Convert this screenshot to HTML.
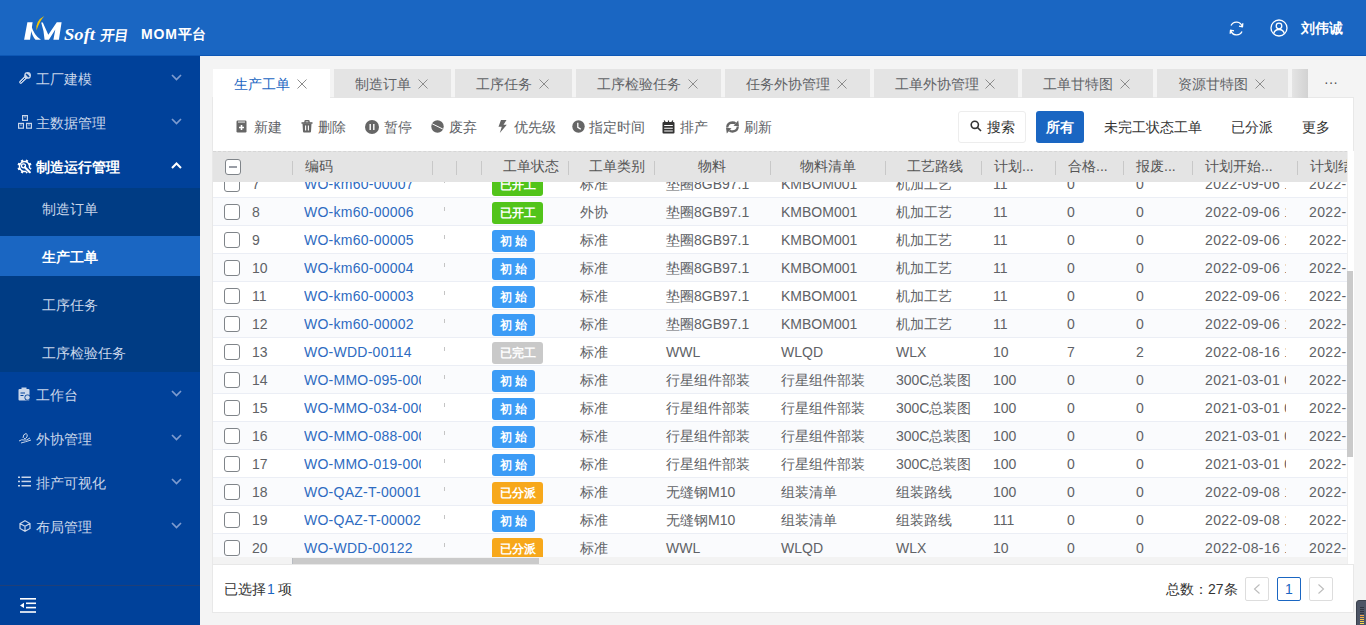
<!DOCTYPE html><html><head><meta charset="utf-8"><style>
*{box-sizing:border-box;margin:0;padding:0}
html,body{width:1366px;height:625px;overflow:hidden;background:#f4f4f4;font-family:"Liberation Sans",sans-serif;font-size:14px;color:#606266}
.a{position:absolute;white-space:nowrap}
#hdr{position:absolute;left:0;top:0;width:1366px;height:56px;background:#1a66c2;border-bottom:1px solid #0d57b5}
#side{position:absolute;left:0;top:56px;width:200px;height:569px;background:#00419a}
.mi{position:absolute;left:0;width:200px;height:44px;color:#c9d6ea}
.mi .t{position:absolute;left:36px;top:15px;line-height:16px}
.mi svg.ic{position:absolute;left:18px;top:16px}
.mi svg.ch{position:absolute;left:171px;top:18px}
.sub{position:absolute;left:0;top:132px;width:200px;height:184px;background:#003c84}
.si{position:absolute;left:0;width:200px;height:40px;color:#c9d6ea}
.si .t{position:absolute;left:42px;top:13px;line-height:16px}
#panel{position:absolute;left:212px;top:97px;width:1142px;height:516px;background:#fff;border:1px solid #e8e8e8}
.tab{position:absolute;top:69px;height:29px;background:#e4e4e4;color:#606266}
.tab .t{position:absolute;top:7px;line-height:16px}
.tab svg{position:absolute;top:10px}
.tb{position:absolute;top:119px;color:#606266;line-height:16px}
.tb svg{position:absolute;top:2px}
#grid{position:absolute;left:213px;top:151px;width:1134px;height:413px;overflow:hidden;background:#fff}
.row{position:absolute;left:0;width:1500px;height:28px;border-bottom:1px solid #ebeef5}
.row.e{background:#fafbfd}
.c{position:absolute;top:6px;line-height:17px;white-space:nowrap;color:#606266}
.cb{position:absolute;left:11px;top:6px;width:16px;height:16px;border:1px solid #7f8489;border-radius:3px;background:#fff}
.bd{position:absolute;left:279px;top:4px;height:22px;border-radius:3px;color:#fff;font-size:12px;font-weight:bold;line-height:22px;text-align:center}
#th{position:absolute;left:0;top:0;width:1500px;height:31px;background:#e4e4e4;border-top:1px dashed #d6d6d6}
.hs{position:absolute;top:9px;width:1px;height:14px;background:#c8c8c8}
.ht{position:absolute;top:6px;line-height:17px;color:#555;white-space:nowrap}
</style></head><body>
<div id="hdr">
<svg class="a" style="left:0;top:0" width="140" height="56" viewBox="0 0 140 56">
<path d="M24.1 39.8 L30 39.8 L32.6 22.2 L27.4 22.2 Z" fill="#fff"/>
<path d="M30.2 27.5 Q32 36 35.5 39.8 L41 39.8 Q34 35.5 31.2 25.5 Z" fill="#fff"/>
<path d="M36.4 30.6 Q35.2 20.5 44.3 15.9 Q39.2 21.5 36.4 30.6 Z" fill="#f5c400"/>
<path d="M41.2 22.6 L42.8 22.6 L48.3 34.8 L56.8 22.2 L61.6 22.2 L58.9 39.8 L53.4 39.8 L55.3 29.5 L48.9 39.8 L44.6 39.8 Q43.8 30 41.2 22.6 Z" fill="#fff"/>
<text x="64" y="40" font-family="Liberation Serif" font-style="italic" font-weight="bold" font-size="16" fill="#fff" textLength="31" lengthAdjust="spacingAndGlyphs">Soft</text>
<text x="0" y="0" transform="translate(100 39.5) skewX(-8)" font-size="14" font-weight="bold" fill="#fff" textLength="28" lengthAdjust="spacingAndGlyphs">开目</text>
</svg>
<div class="a" style="left:141px;top:26px;color:#fff;font-weight:bold;font-size:14px;line-height:16px;letter-spacing:0.8px">MOM平台</div>
<svg class="a" style="left:1228px;top:20px" width="17" height="17" viewBox="0 0 17 17" fill="none" stroke="#fff" stroke-width="1.3">
<path d="M14.2 6.5 A6 6 0 0 0 3 5.5"/><path d="M2.8 10.5 A6 6 0 0 0 14 11.5"/>
<path d="M14.8 3.2 L14.5 6.8 L11 6.2" stroke-linejoin="round"/><path d="M2.2 13.8 L2.5 10.2 L6 10.8" stroke-linejoin="round"/></svg>
<svg class="a" style="left:1270px;top:19px" width="18" height="18" viewBox="0 0 18 18" fill="none" stroke="#fff" stroke-width="1.3">
<circle cx="9" cy="9" r="8"/><circle cx="9" cy="7" r="2.8"/><path d="M3.6 14.8 Q4.5 10.5 9 10.5 Q13.5 10.5 14.4 14.8"/></svg>
<div class="a" style="left:1301px;top:20px;color:#fff;font-weight:bold;line-height:16px">刘伟诚</div>
</div>
<div id="side">
<div class="mi" style="top:0px;color:#c9d6ea"><svg class="ic" style="left:19px;top:15px" width="13" height="13" viewBox="0 0 13 13"><path d="M1.8 11.2 L6.5 6.5" stroke="#c9d6ea" stroke-width="3.2" stroke-linecap="round"/><path d="M1.8 11.2 L6.5 6.5" stroke="#00419a" stroke-width="1" stroke-linecap="round"/><circle cx="8.6" cy="4.4" r="3.4" fill="#c9d6ea"/><path d="M7 2.8 L10.2 6" stroke="#00419a" stroke-width="1.2"/><circle cx="8.6" cy="4.4" r="1" fill="#00419a"/></svg><span class="t">工厂建模</span><svg class="ch" width="11" height="7" viewBox="0 0 11 7" fill="none" stroke="#7d9bcf" stroke-width="1.7"><path d="M1 1 L5.5 5.5 L10 1"/></svg></div>
<div class="mi" style="top:44px;color:#c9d6ea"><svg class="ic" style="left:17px;top:14px" width="16" height="16" viewBox="0 0 16 16" fill="none" stroke="#c9d6ea" stroke-width="1.2"><rect x="5.6" y="1.6" width="4.8" height="4.8"/><rect x="1.6" y="9.4" width="4.8" height="4.8"/><rect x="9.6" y="9.4" width="4.8" height="4.8"/><path d="M7 3 H9 M3 11 H5 M11 11 H13" stroke-width="0.8"/></svg><span class="t">主数据管理</span><svg class="ch" width="11" height="7" viewBox="0 0 11 7" fill="none" stroke="#7d9bcf" stroke-width="1.7"><path d="M1 1 L5.5 5.5 L10 1"/></svg></div>
<div class="mi" style="top:88px;color:#fff;font-weight:bold"><svg class="ic" style="left:17px;top:15px" width="15" height="15" viewBox="0 0 15 15"><circle cx="7.5" cy="7.5" r="5" fill="none" stroke="#fff" stroke-width="1.4"/><rect x="11.75" y="8.56" width="2.4" height="2.4" transform="rotate(22.5 12.95 9.76)" fill="#fff"/><rect x="8.56" y="11.75" width="2.4" height="2.4" transform="rotate(67.5 9.76 12.95)" fill="#fff"/><rect x="4.04" y="11.75" width="2.4" height="2.4" transform="rotate(112.5 5.24 12.95)" fill="#fff"/><rect x="0.85" y="8.56" width="2.4" height="2.4" transform="rotate(157.5 2.05 9.76)" fill="#fff"/><rect x="0.85" y="4.04" width="2.4" height="2.4" transform="rotate(202.5 2.05 5.24)" fill="#fff"/><rect x="4.04" y="0.85" width="2.4" height="2.4" transform="rotate(247.5 5.24 2.05)" fill="#fff"/><rect x="8.56" y="0.85" width="2.4" height="2.4" transform="rotate(292.5 9.76 2.05)" fill="#fff"/><rect x="11.75" y="4.04" width="2.4" height="2.4" transform="rotate(337.5 12.95 5.24)" fill="#fff"/><circle cx="7.5" cy="7.5" r="3.6" fill="#00419a"/><path d="M6.2 6.2 L13 13" stroke="#00419a" stroke-width="4"/><circle cx="6.5" cy="6.8" r="2" fill="none" stroke="#fff" stroke-width="1.3"/><path d="M7.8 8.2 L12.8 13.2" stroke="#fff" stroke-width="2.2" stroke-linecap="round"/></svg><span class="t">制造运行管理</span><svg class="ch" width="11" height="7" viewBox="0 0 11 7" fill="none" stroke="#fff" stroke-width="2"><path d="M1 6 L5.5 1.5 L10 6"/></svg></div>
<div class="sub">
<div class="si" style="top:0px;"><span class="t">制造订单</span></div>
<div class="si" style="top:48px;background:#1a66c2;color:#fff;font-weight:bold"><span class="t">生产工单</span></div>
<div class="si" style="top:96px;"><span class="t">工序任务</span></div>
<div class="si" style="top:144px;"><span class="t">工序检验任务</span></div>
</div>
<div class="mi" style="top:316px;color:#c9d6ea"><svg class="ic" style="left:18px;top:15px" width="13" height="14" viewBox="0 0 13 14"><rect x="0.5" y="2" width="11" height="11.5" rx="1" fill="#c9d6ea"/><rect x="3.5" y="0.5" width="5" height="3" fill="#c9d6ea"/><circle cx="9.5" cy="10.5" r="3" fill="#00419a"/><circle cx="9.5" cy="10.5" r="2.2" fill="#c9d6ea"/><path d="M2.5 6 H7 M2.5 8.5 H5.5" stroke="#00419a" stroke-width="1"/></svg><span class="t">工作台</span><svg class="ch" width="11" height="7" viewBox="0 0 11 7" fill="none" stroke="#7d9bcf" stroke-width="1.7"><path d="M1 1 L5.5 5.5 L10 1"/></svg></div>
<div class="mi" style="top:360px;color:#c9d6ea"><svg class="ic" style="left:18px;top:16px" width="14" height="12" viewBox="0 0 14 12" fill="none" stroke="#c9d6ea" stroke-width="1"><path d="M1 9 Q4 7 6 8 Q8 9 12 6 M3 11 Q7 10 13 8 M5 6 Q5 2 8 1.5 Q10 2 9 5 Q8 7 6 6.5"/></svg><span class="t">外协管理</span><svg class="ch" width="11" height="7" viewBox="0 0 11 7" fill="none" stroke="#7d9bcf" stroke-width="1.7"><path d="M1 1 L5.5 5.5 L10 1"/></svg></div>
<div class="mi" style="top:404px;color:#c9d6ea"><svg class="ic" style="left:18px;top:16px" width="13" height="11" viewBox="0 0 13 11" fill="#c9d6ea"><rect x="0" y="0.5" width="2" height="1.5"/><rect x="3.5" y="0.5" width="9.5" height="1.5"/><rect x="0" y="4.7" width="2" height="1.5"/><rect x="3.5" y="4.7" width="9.5" height="1.5"/><rect x="0" y="9" width="2" height="1.5"/><rect x="3.5" y="9" width="9.5" height="1.5"/></svg><span class="t">排产可视化</span><svg class="ch" width="11" height="7" viewBox="0 0 11 7" fill="none" stroke="#7d9bcf" stroke-width="1.7"><path d="M1 1 L5.5 5.5 L10 1"/></svg></div>
<div class="mi" style="top:448px;color:#c9d6ea"><svg class="ic" style="left:19px;top:16px" width="12" height="12" viewBox="0 0 12 12" fill="none" stroke="#c9d6ea" stroke-width="1.2"><path d="M6 0.8 L11 3.5 V8.5 L6 11.2 L1 8.5 V3.5 Z M1 3.5 L6 6.2 L11 3.5 M6 6.2 V11.2"/></svg><span class="t">布局管理</span><svg class="ch" width="11" height="7" viewBox="0 0 11 7" fill="none" stroke="#7d9bcf" stroke-width="1.7"><path d="M1 1 L5.5 5.5 L10 1"/></svg></div>
<div class="a" style="left:0;top:529px;width:200px;height:1px;background:#1f3f78"></div>
<svg class="a" style="left:20px;top:542px" width="17" height="15" viewBox="0 0 17 15" fill="#fff">
<rect x="0" y="0" width="16" height="1.6"/><rect x="6" y="4.5" width="10" height="1.6"/><rect x="6" y="8.8" width="10" height="1.6"/><rect x="0" y="13.2" width="16" height="1.6"/><path d="M0 7.4 L4 4.8 V10 Z"/></svg>
</div>
<div id="panel"></div>
<div class="tab" style="left:213px;width:117px;background:#fff;color:#1a66c2;height:30px"><span class="t" style="left:21px">生产工单</span><svg style="position:absolute;left:83px;top:9px" width="12" height="12" viewBox="0 0 12 12" stroke="#8c8c8c" stroke-width="1"><path d="M1.5 1.5 L10.5 10.5 M10.5 1.5 L1.5 10.5"/></svg></div>
<div class="tab" style="left:334px;width:117px;background:#e4e4e4;color:#606266"><span class="t" style="left:21px">制造订单</span><svg style="position:absolute;left:83px;top:9px" width="12" height="12" viewBox="0 0 12 12" stroke="#8c8c8c" stroke-width="1"><path d="M1.5 1.5 L10.5 10.5 M10.5 1.5 L1.5 10.5"/></svg></div>
<div class="tab" style="left:455px;width:117px;background:#e4e4e4;color:#606266"><span class="t" style="left:21px">工序任务</span><svg style="position:absolute;left:83px;top:9px" width="12" height="12" viewBox="0 0 12 12" stroke="#8c8c8c" stroke-width="1"><path d="M1.5 1.5 L10.5 10.5 M10.5 1.5 L1.5 10.5"/></svg></div>
<div class="tab" style="left:576px;width:145px;background:#e4e4e4;color:#606266"><span class="t" style="left:21px">工序检验任务</span><svg style="position:absolute;left:111px;top:9px" width="12" height="12" viewBox="0 0 12 12" stroke="#8c8c8c" stroke-width="1"><path d="M1.5 1.5 L10.5 10.5 M10.5 1.5 L1.5 10.5"/></svg></div>
<div class="tab" style="left:725px;width:145px;background:#e4e4e4;color:#606266"><span class="t" style="left:21px">任务外协管理</span><svg style="position:absolute;left:111px;top:9px" width="12" height="12" viewBox="0 0 12 12" stroke="#8c8c8c" stroke-width="1"><path d="M1.5 1.5 L10.5 10.5 M10.5 1.5 L1.5 10.5"/></svg></div>
<div class="tab" style="left:874px;width:144px;background:#e4e4e4;color:#606266"><span class="t" style="left:21px">工单外协管理</span><svg style="position:absolute;left:110px;top:9px" width="12" height="12" viewBox="0 0 12 12" stroke="#8c8c8c" stroke-width="1"><path d="M1.5 1.5 L10.5 10.5 M10.5 1.5 L1.5 10.5"/></svg></div>
<div class="tab" style="left:1022px;width:131px;background:#e4e4e4;color:#606266"><span class="t" style="left:21px">工单甘特图</span><svg style="position:absolute;left:97px;top:9px" width="12" height="12" viewBox="0 0 12 12" stroke="#8c8c8c" stroke-width="1"><path d="M1.5 1.5 L10.5 10.5 M10.5 1.5 L1.5 10.5"/></svg></div>
<div class="tab" style="left:1157px;width:131px;background:#e4e4e4;color:#606266"><span class="t" style="left:21px">资源甘特图</span><svg style="position:absolute;left:97px;top:9px" width="12" height="12" viewBox="0 0 12 12" stroke="#8c8c8c" stroke-width="1"><path d="M1.5 1.5 L10.5 10.5 M10.5 1.5 L1.5 10.5"/></svg></div>
<div class="tab" style="left:1292px;width:16px;background:linear-gradient(90deg,#e4e4e4,#d2d2d2)"></div>
<div class="a" style="left:1324px;top:74px;color:#555;font-size:14px;line-height:16px;letter-spacing:0px">···</div>
<div class="a" style="left:236px;top:120px;line-height:0"><svg width="11" height="13" viewBox="0 0 11 13"><rect x="0.5" y="0.5" width="10" height="12" rx="1.2" fill="#666"/><rect x="2" y="1.6" width="7" height="0.9" fill="#fff"/><path d="M5.5 5 V10 M3 7.5 H8" stroke="#fff" stroke-width="1.6"/></svg></div>
<div class="tb" style="left:254px">新建</div>
<div class="a" style="left:301px;top:120px;line-height:0"><svg width="12" height="13" viewBox="0 0 12 13"><path d="M0.5 3 H11.5" stroke="#666" stroke-width="1.6"/><path d="M4 3 V1.5 Q4 0.8 4.8 0.8 H7.2 Q8 0.8 8 1.5 V3" stroke="#666" stroke-width="1.4" fill="none"/><path d="M1.5 3.5 H10.5 L10 11.5 Q10 12.5 9 12.5 H3 Q2 12.5 2 11.5 Z" fill="#666"/><path d="M4.6 5.5 V10.5 M7.4 5.5 V10.5" stroke="#fff" stroke-width="1.1"/></svg></div>
<div class="tb" style="left:318px">删除</div>
<div class="a" style="left:365px;top:120px;line-height:0"><svg width="14" height="14" viewBox="0 0 14 14"><circle cx="7" cy="7" r="7" fill="#666"/><path d="M5.2 4 V10 M8.8 4 V10" stroke="#fff" stroke-width="1.4"/></svg></div>
<div class="tb" style="left:384px">暂停</div>
<div class="a" style="left:431px;top:120px;line-height:0"><svg width="13" height="13" viewBox="0 0 13 13"><circle cx="6.5" cy="6.5" r="6.2" fill="#666"/><path d="M1.2 3.8 L11.8 9" stroke="#fff" stroke-width="1"/></svg></div>
<div class="tb" style="left:449px">废弃</div>
<div class="a" style="left:498px;top:120px;line-height:0"><svg width="9" height="13" viewBox="0 0 9 13"><path d="M3 0 H8.5 L5.5 4.8 H8.8 L1.8 13 L3.8 6.8 H0.5 Z" fill="#666"/></svg></div>
<div class="tb" style="left:514px">优先级</div>
<div class="a" style="left:572px;top:120px;line-height:0"><svg width="13" height="13" viewBox="0 0 13 13"><circle cx="6.5" cy="6.5" r="6.2" fill="#666"/><path d="M5.8 2.8 V7.3 L8.8 9.3" stroke="#fff" stroke-width="1.3" fill="none"/></svg></div>
<div class="tb" style="left:589px">指定时间</div>
<div class="a" style="left:662px;top:120px;line-height:0"><svg width="13" height="14" viewBox="0 0 13 14"><rect x="0.5" y="2" width="12" height="11.5" rx="1" fill="#333"/><path d="M2.2 0.5 L3.2 2.5 M6.5 0.5 L6.5 2.5 M10.8 0.5 L9.8 2.5" stroke="#333" stroke-width="1.2"/><path d="M2.2 5.5 H10.8 M2.2 8.2 H10.8 M2.2 11 H10.8" stroke="#fff" stroke-width="1.1"/></svg></div>
<div class="tb" style="left:680px">排产</div>
<div class="a" style="left:725px;top:120px;line-height:0"><svg width="15" height="14" viewBox="0 0 15 14"><path d="M2.2 7.5 Q2.5 2.8 7.5 2.5 Q9.5 2.5 10.5 3.5" fill="none" stroke="#666" stroke-width="2.3"/><path d="M8.5 5.8 L14 6.2 L13.2 0.5 Z" fill="#666"/><path d="M12.8 6.5 Q12.5 11.2 7.5 11.5 Q5.5 11.5 4.5 10.5" fill="none" stroke="#666" stroke-width="2.3"/><path d="M6.5 8.2 L1 7.8 L1.8 13.5 Z" fill="#666"/></svg></div>
<div class="tb" style="left:744px">刷新</div>
<div class="a" style="left:958px;top:111px;width:68px;height:32px;border:1px solid #ededed;border-radius:3px;background:#fff"></div>
<svg class="a" style="left:970px;top:120px" width="12" height="12" viewBox="0 0 12 12" fill="none" stroke="#333" stroke-width="1.6"><circle cx="4.8" cy="4.8" r="3.6"/><path d="M7.5 7.5 L11 11"/></svg>
<div class="tb" style="left:987px;color:#333">搜索</div>
<div class="a" style="left:1036px;top:111px;width:48px;height:32px;border-radius:3px;background:#1a66c2;color:#fff;line-height:32px;text-align:center;font-size:14px;font-weight:bold">所有</div>
<div class="tb" style="left:1104px;color:#333">未完工状态工单</div>
<div class="tb" style="left:1231px;color:#333">已分派</div>
<div class="tb" style="left:1302px;color:#333">更多</div>
<div id="grid">
<div class="row" style="top:19px"><div class="cb"></div><span class="c" style="left:39px">7</span><span class="c" style="left:91px;width:117px;overflow:hidden;color:#2e6bc1;letter-spacing:0.25px">WO-km60-00007</span><span class="a" style="left:231px;top:9px;width:1px;height:4px;background:#c4c4c4"></span><span class="bd" style="width:51px;background:#52c41a">已开工</span><span class="c" style="left:367px">标准</span><span class="c" style="left:453px">垫圈8GB97.1</span><span class="c" style="left:568px">KMBOM001</span><span class="c" style="left:683px">机加工艺</span><span class="c" style="left:780px">11</span><span class="c" style="left:854px">0</span><span class="c" style="left:923px">0</span><span class="c" style="left:992px;width:81px;overflow:hidden;letter-spacing:0.35px">2022-09-06 14:00</span><span class="c" style="left:1096px;letter-spacing:0.35px">2022-</span></div>
<div class="row e" style="top:47px"><div class="cb"></div><span class="c" style="left:39px">8</span><span class="c" style="left:91px;width:117px;overflow:hidden;color:#2e6bc1;letter-spacing:0.25px">WO-km60-00006</span><span class="a" style="left:231px;top:9px;width:1px;height:4px;background:#c4c4c4"></span><span class="bd" style="width:51px;background:#52c41a">已开工</span><span class="c" style="left:367px">外协</span><span class="c" style="left:453px">垫圈8GB97.1</span><span class="c" style="left:568px">KMBOM001</span><span class="c" style="left:683px">机加工艺</span><span class="c" style="left:780px">11</span><span class="c" style="left:854px">0</span><span class="c" style="left:923px">0</span><span class="c" style="left:992px;width:81px;overflow:hidden;letter-spacing:0.35px">2022-09-06 14:00</span><span class="c" style="left:1096px;letter-spacing:0.35px">2022-</span></div>
<div class="row" style="top:75px"><div class="cb"></div><span class="c" style="left:39px">9</span><span class="c" style="left:91px;width:117px;overflow:hidden;color:#2e6bc1;letter-spacing:0.25px">WO-km60-00005</span><span class="a" style="left:231px;top:9px;width:1px;height:4px;background:#c4c4c4"></span><span class="bd" style="width:43px;background:#3c9cf6">初 始</span><span class="c" style="left:367px">标准</span><span class="c" style="left:453px">垫圈8GB97.1</span><span class="c" style="left:568px">KMBOM001</span><span class="c" style="left:683px">机加工艺</span><span class="c" style="left:780px">11</span><span class="c" style="left:854px">0</span><span class="c" style="left:923px">0</span><span class="c" style="left:992px;width:81px;overflow:hidden;letter-spacing:0.35px">2022-09-06 14:00</span><span class="c" style="left:1096px;letter-spacing:0.35px">2022-</span></div>
<div class="row e" style="top:103px"><div class="cb"></div><span class="c" style="left:39px">10</span><span class="c" style="left:91px;width:117px;overflow:hidden;color:#2e6bc1;letter-spacing:0.25px">WO-km60-00004</span><span class="a" style="left:231px;top:9px;width:1px;height:4px;background:#c4c4c4"></span><span class="bd" style="width:43px;background:#3c9cf6">初 始</span><span class="c" style="left:367px">标准</span><span class="c" style="left:453px">垫圈8GB97.1</span><span class="c" style="left:568px">KMBOM001</span><span class="c" style="left:683px">机加工艺</span><span class="c" style="left:780px">11</span><span class="c" style="left:854px">0</span><span class="c" style="left:923px">0</span><span class="c" style="left:992px;width:81px;overflow:hidden;letter-spacing:0.35px">2022-09-06 14:00</span><span class="c" style="left:1096px;letter-spacing:0.35px">2022-</span></div>
<div class="row" style="top:131px"><div class="cb"></div><span class="c" style="left:39px">11</span><span class="c" style="left:91px;width:117px;overflow:hidden;color:#2e6bc1;letter-spacing:0.25px">WO-km60-00003</span><span class="a" style="left:231px;top:9px;width:1px;height:4px;background:#c4c4c4"></span><span class="bd" style="width:43px;background:#3c9cf6">初 始</span><span class="c" style="left:367px">标准</span><span class="c" style="left:453px">垫圈8GB97.1</span><span class="c" style="left:568px">KMBOM001</span><span class="c" style="left:683px">机加工艺</span><span class="c" style="left:780px">11</span><span class="c" style="left:854px">0</span><span class="c" style="left:923px">0</span><span class="c" style="left:992px;width:81px;overflow:hidden;letter-spacing:0.35px">2022-09-06 14:00</span><span class="c" style="left:1096px;letter-spacing:0.35px">2022-</span></div>
<div class="row e" style="top:159px"><div class="cb"></div><span class="c" style="left:39px">12</span><span class="c" style="left:91px;width:117px;overflow:hidden;color:#2e6bc1;letter-spacing:0.25px">WO-km60-00002</span><span class="a" style="left:231px;top:9px;width:1px;height:4px;background:#c4c4c4"></span><span class="bd" style="width:43px;background:#3c9cf6">初 始</span><span class="c" style="left:367px">标准</span><span class="c" style="left:453px">垫圈8GB97.1</span><span class="c" style="left:568px">KMBOM001</span><span class="c" style="left:683px">机加工艺</span><span class="c" style="left:780px">11</span><span class="c" style="left:854px">0</span><span class="c" style="left:923px">0</span><span class="c" style="left:992px;width:81px;overflow:hidden;letter-spacing:0.35px">2022-09-06 14:00</span><span class="c" style="left:1096px;letter-spacing:0.35px">2022-</span></div>
<div class="row" style="top:187px"><div class="cb"></div><span class="c" style="left:39px">13</span><span class="c" style="left:91px;width:117px;overflow:hidden;color:#2e6bc1;letter-spacing:0.25px">WO-WDD-00114</span><span class="a" style="left:231px;top:9px;width:1px;height:4px;background:#c4c4c4"></span><span class="bd" style="width:51px;background:#c9c9c9">已完工</span><span class="c" style="left:367px">标准</span><span class="c" style="left:453px">WWL</span><span class="c" style="left:568px">WLQD</span><span class="c" style="left:683px">WLX</span><span class="c" style="left:780px">10</span><span class="c" style="left:854px">7</span><span class="c" style="left:923px">2</span><span class="c" style="left:992px;width:81px;overflow:hidden;letter-spacing:0.35px">2022-08-16 10:00</span><span class="c" style="left:1096px;letter-spacing:0.35px">2022-</span></div>
<div class="row e" style="top:215px"><div class="cb"></div><span class="c" style="left:39px">14</span><span class="c" style="left:91px;width:117px;overflow:hidden;color:#2e6bc1;letter-spacing:0.25px">WO-MMO-095-0001</span><span class="a" style="left:231px;top:9px;width:1px;height:4px;background:#c4c4c4"></span><span class="bd" style="width:43px;background:#3c9cf6">初 始</span><span class="c" style="left:367px">标准</span><span class="c" style="left:453px">行星组件部装</span><span class="c" style="left:568px">行星组件部装</span><span class="c" style="left:683px">300C总装图</span><span class="c" style="left:780px">100</span><span class="c" style="left:854px">0</span><span class="c" style="left:923px">0</span><span class="c" style="left:992px;width:81px;overflow:hidden;letter-spacing:0.35px">2021-03-01 00:00</span><span class="c" style="left:1096px;letter-spacing:0.35px">2022-</span></div>
<div class="row" style="top:243px"><div class="cb"></div><span class="c" style="left:39px">15</span><span class="c" style="left:91px;width:117px;overflow:hidden;color:#2e6bc1;letter-spacing:0.25px">WO-MMO-034-0001</span><span class="a" style="left:231px;top:9px;width:1px;height:4px;background:#c4c4c4"></span><span class="bd" style="width:43px;background:#3c9cf6">初 始</span><span class="c" style="left:367px">标准</span><span class="c" style="left:453px">行星组件部装</span><span class="c" style="left:568px">行星组件部装</span><span class="c" style="left:683px">300C总装图</span><span class="c" style="left:780px">100</span><span class="c" style="left:854px">0</span><span class="c" style="left:923px">0</span><span class="c" style="left:992px;width:81px;overflow:hidden;letter-spacing:0.35px">2021-03-01 00:00</span><span class="c" style="left:1096px;letter-spacing:0.35px">2022-</span></div>
<div class="row e" style="top:271px"><div class="cb"></div><span class="c" style="left:39px">16</span><span class="c" style="left:91px;width:117px;overflow:hidden;color:#2e6bc1;letter-spacing:0.25px">WO-MMO-088-0001</span><span class="a" style="left:231px;top:9px;width:1px;height:4px;background:#c4c4c4"></span><span class="bd" style="width:43px;background:#3c9cf6">初 始</span><span class="c" style="left:367px">标准</span><span class="c" style="left:453px">行星组件部装</span><span class="c" style="left:568px">行星组件部装</span><span class="c" style="left:683px">300C总装图</span><span class="c" style="left:780px">100</span><span class="c" style="left:854px">0</span><span class="c" style="left:923px">0</span><span class="c" style="left:992px;width:81px;overflow:hidden;letter-spacing:0.35px">2021-03-01 00:00</span><span class="c" style="left:1096px;letter-spacing:0.35px">2022-</span></div>
<div class="row" style="top:299px"><div class="cb"></div><span class="c" style="left:39px">17</span><span class="c" style="left:91px;width:117px;overflow:hidden;color:#2e6bc1;letter-spacing:0.25px">WO-MMO-019-0001</span><span class="a" style="left:231px;top:9px;width:1px;height:4px;background:#c4c4c4"></span><span class="bd" style="width:43px;background:#3c9cf6">初 始</span><span class="c" style="left:367px">标准</span><span class="c" style="left:453px">行星组件部装</span><span class="c" style="left:568px">行星组件部装</span><span class="c" style="left:683px">300C总装图</span><span class="c" style="left:780px">100</span><span class="c" style="left:854px">0</span><span class="c" style="left:923px">0</span><span class="c" style="left:992px;width:81px;overflow:hidden;letter-spacing:0.35px">2021-03-01 00:00</span><span class="c" style="left:1096px;letter-spacing:0.35px">2022-</span></div>
<div class="row e" style="top:327px"><div class="cb"></div><span class="c" style="left:39px">18</span><span class="c" style="left:91px;width:117px;overflow:hidden;color:#2e6bc1;letter-spacing:0.25px">WO-QAZ-T-00001</span><span class="a" style="left:231px;top:9px;width:1px;height:4px;background:#c4c4c4"></span><span class="bd" style="width:51px;background:#f7a81b">已分派</span><span class="c" style="left:367px">标准</span><span class="c" style="left:453px">无缝钢M10</span><span class="c" style="left:568px">组装清单</span><span class="c" style="left:683px">组装路线</span><span class="c" style="left:780px">100</span><span class="c" style="left:854px">0</span><span class="c" style="left:923px">0</span><span class="c" style="left:992px;width:81px;overflow:hidden;letter-spacing:0.35px">2022-09-08 10:00</span><span class="c" style="left:1096px;letter-spacing:0.35px">2022-</span></div>
<div class="row" style="top:355px"><div class="cb"></div><span class="c" style="left:39px">19</span><span class="c" style="left:91px;width:117px;overflow:hidden;color:#2e6bc1;letter-spacing:0.25px">WO-QAZ-T-00002</span><span class="a" style="left:231px;top:9px;width:1px;height:4px;background:#c4c4c4"></span><span class="bd" style="width:43px;background:#3c9cf6">初 始</span><span class="c" style="left:367px">标准</span><span class="c" style="left:453px">无缝钢M10</span><span class="c" style="left:568px">组装清单</span><span class="c" style="left:683px">组装路线</span><span class="c" style="left:780px">111</span><span class="c" style="left:854px">0</span><span class="c" style="left:923px">0</span><span class="c" style="left:992px;width:81px;overflow:hidden;letter-spacing:0.35px">2022-09-08 10:00</span><span class="c" style="left:1096px;letter-spacing:0.35px">2022-</span></div>
<div class="row e" style="top:383px"><div class="cb"></div><span class="c" style="left:39px">20</span><span class="c" style="left:91px;width:117px;overflow:hidden;color:#2e6bc1;letter-spacing:0.25px">WO-WDD-00122</span><span class="a" style="left:231px;top:9px;width:1px;height:4px;background:#c4c4c4"></span><span class="bd" style="width:51px;background:#f7a81b">已分派</span><span class="c" style="left:367px">标准</span><span class="c" style="left:453px">WWL</span><span class="c" style="left:568px">WLQD</span><span class="c" style="left:683px">WLX</span><span class="c" style="left:780px">10</span><span class="c" style="left:854px">0</span><span class="c" style="left:923px">0</span><span class="c" style="left:992px;width:81px;overflow:hidden;letter-spacing:0.35px">2022-08-16 10:00</span><span class="c" style="left:1096px;letter-spacing:0.35px">2022-</span></div>
<div id="th">
<div class="cb" style="left:12px;top:7px;background:#fff"><div style="position:absolute;left:3px;top:6px;width:8px;height:1.6px;background:#9a9ea6"></div></div>
<div class="hs" style="left:79px"></div>
<div class="hs" style="left:219px"></div>
<div class="hs" style="left:243px"></div>
<div class="hs" style="left:268px"></div>
<div class="hs" style="left:355px"></div>
<div class="hs" style="left:441px"></div>
<div class="hs" style="left:557px"></div>
<div class="hs" style="left:672px"></div>
<div class="hs" style="left:768px"></div>
<div class="hs" style="left:842px"></div>
<div class="hs" style="left:910px"></div>
<div class="hs" style="left:979px"></div>
<div class="hs" style="left:1084px"></div>
<span class="ht" style="left:92px">编码</span>
<span class="ht" style="left:290px">工单状态</span>
<span class="ht" style="left:376px">工单类别</span>
<span class="ht" style="left:485px">物料</span>
<span class="ht" style="left:587px">物料清单</span>
<span class="ht" style="left:694px">工艺路线</span>
<span class="ht" style="left:781px">计划...</span>
<span class="ht" style="left:855px">合格...</span>
<span class="ht" style="left:923px">报废...</span>
<span class="ht" style="left:992px">计划开始...</span>
<span class="ht" style="left:1097px">计划结束时间</span>
</div>
<div class="a" style="left:0;top:406px;width:1134px;height:7px;background:#f3f3f3"></div>
<div class="a" style="left:79px;top:407px;width:247px;height:6px;background:#cacaca;border-left:1px solid #b8bcc2"></div>
</div>
<div class="a" style="left:1347px;top:151px;width:7px;height:413px;background:#fff;border-left:1px solid #f0f0f0"></div>
<div class="a" style="left:1347px;top:271px;width:6px;height:186px;background:#cacaca"></div>
<div class="a" style="left:213px;top:564px;width:1140px;height:1px;background:#e8e8e8"></div>
<div class="a" style="left:224px;top:581px;color:#333;line-height:16px">已选择<span style="color:#1a66c2;margin:0 3px 0 1px">1</span>项</div>
<div class="a" style="left:1166px;top:581px;color:#333;line-height:16px">总数：27条</div>
<div class="a" style="left:1245px;top:577px;width:24px;height:24px;border:1px solid #ddd;border-radius:2px"></div>
<svg class="a" style="left:1253px;top:584px" width="8" height="10" viewBox="0 0 8 10" fill="none" stroke="#bbb" stroke-width="1.1"><path d="M6.5 0.5 L1.5 5 L6.5 9.5"/></svg>
<div class="a" style="left:1277px;top:577px;width:24px;height:24px;border:1px solid #1a66c2;border-radius:2px;color:#1a66c2;text-align:center;line-height:22px">1</div>
<div class="a" style="left:1309px;top:577px;width:24px;height:24px;border:1px solid #ddd;border-radius:2px"></div>
<svg class="a" style="left:1317px;top:584px" width="8" height="10" viewBox="0 0 8 10" fill="none" stroke="#bbb" stroke-width="1.1"><path d="M1.5 0.5 L6.5 5 L1.5 9.5"/></svg>
<div class="a" style="left:1356px;top:600px;width:14px;height:30px;background:#4d5566;border:1px solid #3a404c;border-radius:3px"></div>
<div class="a" style="left:1360px;top:606.5px;width:4px;height:1px;background:#2f3440"></div>
<div class="a" style="left:1360px;top:608.5px;width:4px;height:1px;background:#2f3440"></div>
<div class="a" style="left:1360px;top:610.5px;width:4px;height:1px;background:#2f3440"></div>
<div class="a" style="left:1360px;top:612.5px;width:4px;height:1px;background:#2f3440"></div>
<div class="a" style="left:1360px;top:614.5px;width:4px;height:1px;background:#f5a54a"></div>
<div class="a" style="left:1360px;top:616.5px;width:4px;height:1px;background:#f5b04a"></div>
<div class="a" style="left:1360px;top:618.5px;width:4px;height:1px;background:#f5c04a"></div>
<div class="a" style="left:1360px;top:620.5px;width:4px;height:1px;background:#f5d04a"></div>
<div class="a" style="left:1360px;top:622.5px;width:4px;height:1px;background:#f5dc4a"></div>
</body></html>
